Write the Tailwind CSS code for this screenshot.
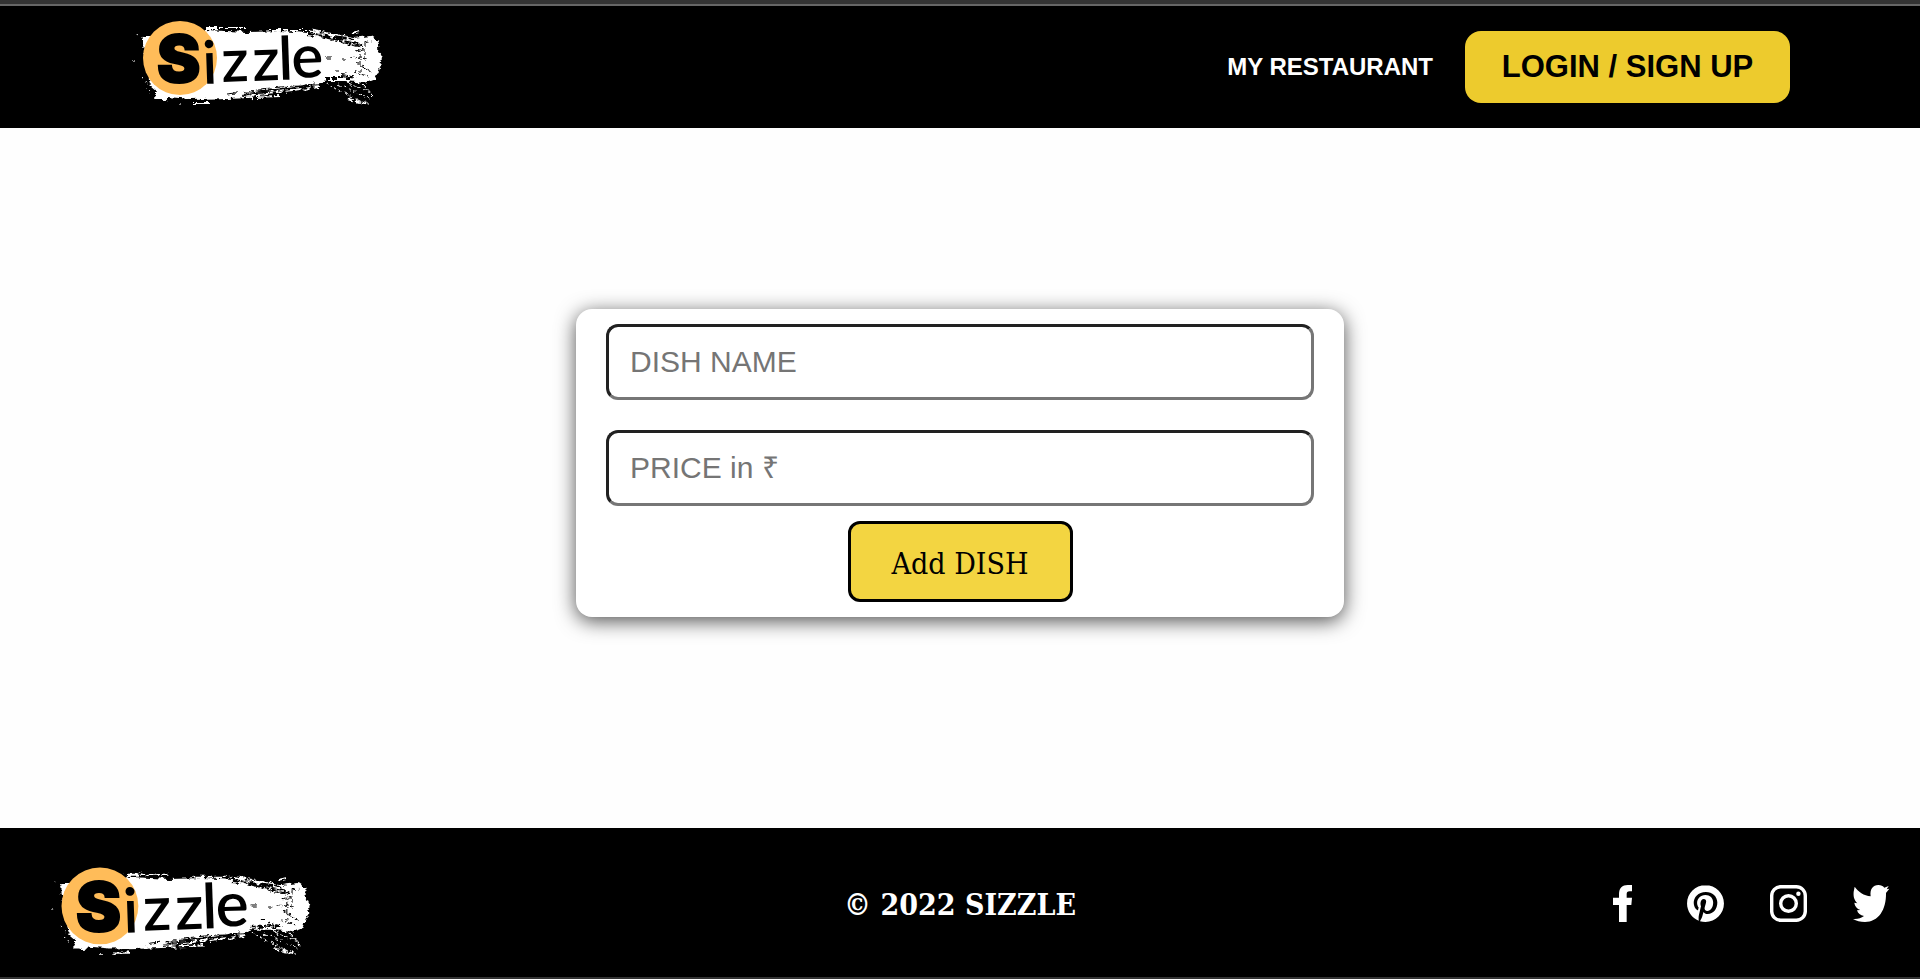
<!DOCTYPE html>
<html lang="en">
<head>
<meta charset="utf-8">
<meta name="viewport" content="width=device-width, initial-scale=1">
<title>Sizzle</title>
<script src="https://cdn.jsdelivr.net/npm/@tailwindcss/browser@4"></script>
</head>
<body class="flex min-h-screen flex-col bg-[#fefefe] font-['Liberation_Sans',Arial,sans-serif]">

<!-- Logo artwork shared by header and footer -->
<svg class="absolute size-0" aria-hidden="true">
  <defs>
    <filter id="rough" x="-10%" y="-20%" width="120%" height="140%">
      <feTurbulence type="fractalNoise" baseFrequency="0.15 0.3" numOctaves="3" seed="4" result="n"/>
      <feDisplacementMap in="SourceGraphic" in2="n" scale="6" xChannelSelector="R" yChannelSelector="G"/>
    </filter>
    <symbol id="logo" viewBox="0 0 260 90">
      <g filter="url(#rough)">
        <path fill="#fff" d="M60 16 75 15 117 17 150 16 177 18 200 19 223 23 240 21 249 27 248 33 252 42 250 52 245 64 235 68 215 66 197 66 190 69 157 73 123 77 100 83 60 84 38 82 36 87 31 84 23 84 27 76 20 70 13 30 13 22 30 22Z"/>
        <g fill="none" stroke="#fff" stroke-width="2">
          <path d="M75 13H115M140 15H176M178 15 214 21M222 18 230 16" stroke-dasharray="12 2 5 2"/>
          <path d="M70 84 150 81M100 82 190 72M62 88H80" stroke-dasharray="16 2 7 3"/>
          <path d="M198 70 238 90M208 69 240 84M218 68 240 77M232 69 242 80" stroke-dasharray="4 3 2 2" stroke-width="1"/>
          <path d="M218 84 238 89" stroke-dasharray="5 2"/>
          <path d="M6 20 20 26M3 46H6M12 62 18 70M14 73 20 77M50 90H53M62 91H65" stroke-dasharray="2 4" stroke-width="1"/>
        </g>
        <g fill="none" stroke="#000">
          <path d="M178 19 226 25M190 21 232 30" stroke-dasharray="14 2 7 2" stroke-width="2"/>
          <path d="M205 26 230 32M222 31 242 26M226 36 238 33M220 42 237 44M226 48 236 54M224 56 238 62M230 34V60M235 28V44M232 50 242 58" stroke-dasharray="3 3 5 3"/>
          <path d="M195 63H222M212 60 226 63" stroke-dasharray="5 2" stroke-width="2"/>
          <path d="M196 43H202M212 44H216M205 56H208"/>
          <path d="M96 79 150 74M110 81 140 77M130 74 185 69" stroke-dasharray="12 3" stroke-width="1"/>
        </g>
      </g>
      <circle cx="50" cy="43" r="37" fill="#ffbc59"/>
      <text x="27" y="67" font-family="Inter, sans-serif" font-weight="900" font-size="65" stroke="#000" stroke-width="2">S</text>
      <g font-family="Lato, sans-serif" font-size="60" font-weight="600">
        <text x="73 92 123 149 162" y="69 67 66 65 63" rotate="-2">izzle</text>
      </g>
    </symbol>
  </defs>
</svg>

<header class="border-t-4 border-[#333] bg-black">
  <div class="flex w-full items-center justify-between border-t-2 border-[#666] px-[130px]">
    <a href="#" aria-label="Sizzle home" class="pt-[9px] pb-[23px]"><svg class="h-[90px] w-[260px]"><use href="#logo"/></svg></a>
    <nav class="flex items-center gap-8">
      <a href="#" class="text-2xl font-bold text-white">MY RESTAURANT</a>
      <button class="h-[72px] w-[325px] rounded-2xl bg-[#edcb2d] text-[31px] font-bold text-black">LOGIN / SIGN UP</button>
    </nav>
  </div>
</header>

<main class="flex grow items-center justify-center pb-[30px]">
  <form class="flex w-2/5 flex-col items-center rounded-2xl bg-white px-[30px] py-[15px] shadow-[0_4px_20px_#000000b0]">
    <input type="text" aria-label="Dish name" placeholder="DISH NAME" class="mb-[30px] h-[76px] w-full rounded-xl border-3 border-t-[#212121] border-r-[#767676] border-b-[#767676] border-l-[#212121] px-[21px] text-[30px] placeholder:text-[#757575]">
    <input type="text" aria-label="Price in rupees" placeholder="PRICE in ₹" class="mb-[15px] h-[76px] w-full rounded-xl border-3 border-t-[#212121] border-r-[#767676] border-b-[#767676] border-l-[#212121] px-[21px] text-[30px] placeholder:text-[#757575]">
    <button type="button" class="h-[81px] w-[225px] rounded-xl border-3 border-black bg-[#f3d541] pt-1 font-['Roboto_Slab','DejaVu_Serif_Condensed','DejaVu_Serif',serif] text-[30px] text-black">Add DISH</button>
  </form>
</main>

<footer class="grid grid-cols-3 items-center border-b-2 border-[#333] bg-black pt-[33px] pr-[30px] pb-[22px] pl-12">
  <a href="#" aria-label="Sizzle home" class="justify-self-start"><svg class="h-[94px] w-[270px]"><use href="#logo"/></svg></a>
  <p class="pr-[18px] pb-2 text-center font-['Roboto_Slab','DejaVu_Serif_Condensed','DejaVu_Serif',serif] text-[30px] font-bold whitespace-nowrap text-white">© 2022 SIZZLE</p>
  <div class="flex justify-end gap-[46px] pb-[10px] text-white">
    <a href="#" aria-label="Facebook"><svg class="size-[37px]" viewBox="0 0 111 111" fill="currentColor"><path d="M45 111V60H27V38H45V27C45 9 55 0 71 0H84V19H77C70 19 68 22 68 28V38H84L82 60H68V111Z"/></svg></a>
    <a href="#" aria-label="Pinterest"><svg class="size-[37px]" viewBox="0 0 24 24" fill="currentColor"><path d="M12.017 0C5.396 0 .029 5.367.029 11.987c0 5.079 3.158 9.417 7.618 11.162-.105-.949-.199-2.403.041-3.439.219-.937 1.406-5.957 1.406-5.957s-.359-.72-.359-1.781c0-1.663.967-2.911 2.168-2.911 1.024 0 1.518.769 1.518 1.688 0 1.029-.653 2.567-.992 3.992-.285 1.193.6 2.165 1.775 2.165 2.128 0 3.768-2.245 3.768-5.487 0-2.861-2.063-4.869-5.008-4.869-3.41 0-5.409 2.562-5.409 5.199 0 1.033.394 2.143.889 2.741.099.12.112.225.085.345-.09.375-.293 1.199-.334 1.363-.053.225-.172.271-.401.165-1.495-.69-2.433-2.878-2.433-4.646 0-3.776 2.748-7.252 7.92-7.252 4.158 0 7.392 2.967 7.392 6.923 0 4.135-2.607 7.462-6.233 7.462-1.214 0-2.354-.629-2.758-1.379l-.749 2.848c-.269 1.045-1.004 2.352-1.498 3.146 1.123.345 2.306.535 3.55.535 6.607 0 11.985-5.365 11.985-11.987C23.97 5.39 18.592.026 11.985.026L12.017 0z"/></svg></a>
    <a href="#" aria-label="Instagram"><svg class="size-[37px]" viewBox="0 0 37 37" fill="none" stroke="currentColor"><rect x="1.7" y="1.7" width="33.6" height="33.6" rx="9" stroke-width="3.4"/><circle cx="18.5" cy="18.5" r="7.8" stroke-width="3.4"/><circle cx="28.4" cy="8.7" r="2.2" fill="currentColor" stroke="none"/></svg></a>
    <a href="#" aria-label="Twitter"><svg class="size-[37px]" viewBox="0 0 111 111" fill="currentColor"><path d="M5 5C15 20 33 32 53 34 50 12 60 0 76 0 84 0 90 3 94 8L107 3 101 13 109 11 99 24C100 75 76 111 36 111 22 111 10 108 0 102 14 103 24 100 33 93 22 91 15 86 12 76L22 75C12 71 5 64 4 53L13 55C2 43 1 33 2 20Z"/></svg></a>
  </div>
</footer>
</body>
</html>
